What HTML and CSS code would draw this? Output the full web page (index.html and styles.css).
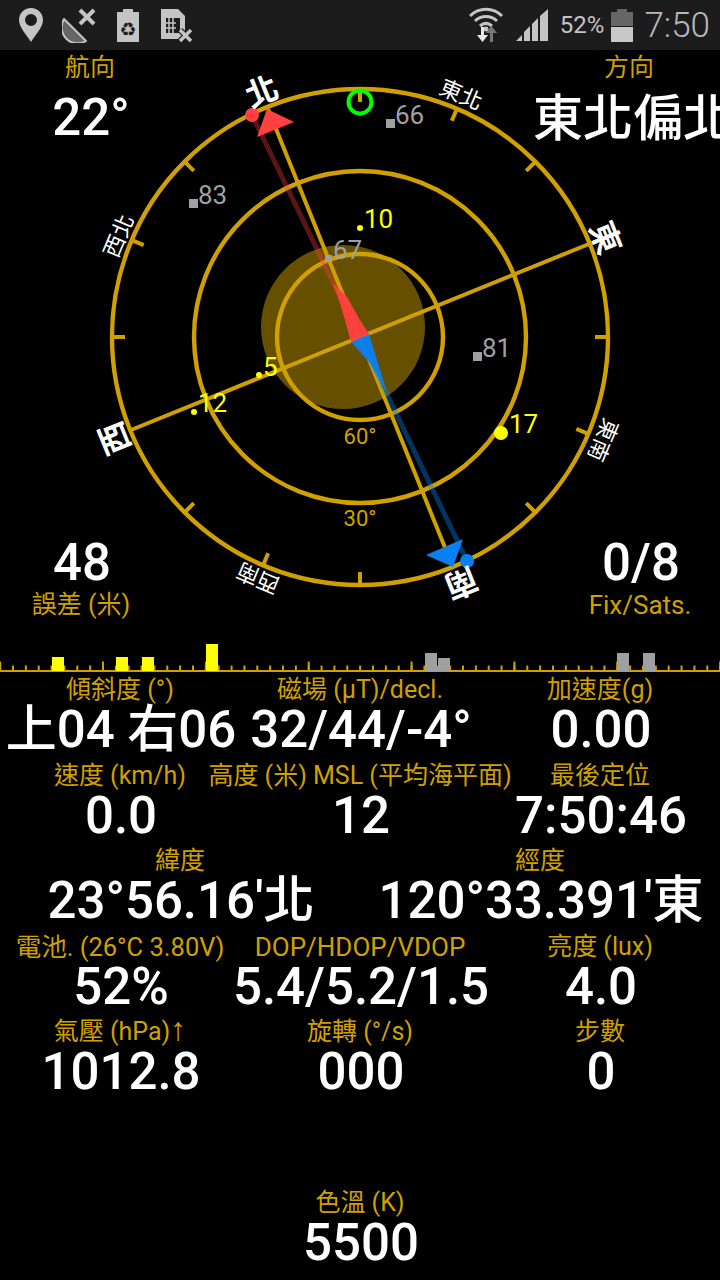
FILE: index.html
```html
<!DOCTYPE html>
<html lang="zh-Hant">
<head>
    <meta charset="UTF-8">
    <meta name="viewport" content="width=device-width, initial-scale=1.0">
    <title>GPS Status</title>
    <link rel="stylesheet" href="styles.css">
</head>
<body>
    <div class="statusbar">
        <div class="status-left">
            <svg class="ic-pin" width="24" height="34" viewBox="0 0 24 34"><path fill-rule="evenodd" fill="#c4c4c4" d="M12 0C5.2 0 0 5.3 0 12c0 7.5 7.5 14.5 12 22 4.5-7.500 12-14.500 12-22C24 5.300 18.800 0 12 0zm0 6a6 6 0 1 1 0 12 6 6 0 0 1 0-12z"/></svg>
            <svg class="ic-dish" width="36" height="36" viewBox="0 0 36 36"><path d="M2 12A16 16 0 0 0 24 34z" fill="#666" stroke="#c4c4c4" stroke-width="2" stroke-linejoin="round"/><path d="M18 3l14 14M32 3L18 17" stroke="#c4c4c4" stroke-width="4"/></svg>
            <svg class="ic-recycle" width="22" height="33" viewBox="0 0 22 33"><path fill="#c4c4c4" d="M6 0h10v3h6v30H0V3h6z"/><text class="recycle-glyph" x="11" y="27" text-anchor="middle">♻</text></svg>
            <svg class="ic-sim" width="32" height="34" viewBox="0 0 32 34"><path fill="#c4c4c4" d="M0 0h17l7 7v23H0z"/><path fill="#1c1c1c" d="M5 9h14v15H5zM16 19v5"/><path d="M8 9v15M12 9v15M5 14h10M5 19h10" stroke="#c4c4c4" stroke-width="1.500"/><path d="M19 21l11 11M30 21L19 32" stroke="#1c1c1c" stroke-width="6"/><path d="M19 21l11 11M30 21L19 32" stroke="#c4c4c4" stroke-width="3.500"/></svg>
        </div>
        <div class="status-right">
            <svg class="ic-wifi" width="34" height="36" viewBox="0 0 34 36"><g fill="none" stroke="#c4c4c4" stroke-width="3"><path d="M1 9C10 0 24 0 33 9"/><path d="M6 14c6-6 16-6 22 0"/><path d="M11 19c4-3.500 8-3.500 12 0"/></g><circle cx="17" cy="22" r="2.500" fill="#c4c4c4"/><path d="M12 20h3v8h4l-5.500 7L8 28h4z" fill="#e8e8e8"/><path d="M21 35v-9h-4l5.500-7 5.500 7h-4v9z" fill="#777"/></svg>
            <svg class="ic-signal" width="32" height="32" viewBox="0 0 32 32"><path fill="#c4c4c4" d="M0 32l6-6v6zM8 32V23l6-6v15zM16 32V15l6-6v23zM24 32V7l8-7v32z"/></svg>
            <span class="batt-text">52%</span>
            <svg class="ic-batt" width="22" height="33" viewBox="0 0 22 33"><path fill="#666" d="M6 0h10v3h6v14H0V3h6z"/><rect y="18" width="22" height="15" fill="#c8c8c8"/></svg>
            <span class="clock">7:50</span>
        </div>
    </div>

    <div class="compass">
        <svg class="dial" width="720" height="580" viewBox="0 50 720 580">
            <circle cx="343" cy="327" r="82" fill="#665000"/>

            <g fill="none" stroke="#d0a000" stroke-width="4.400">
                <circle cx="360" cy="337" r="248"/>
                <circle cx="360" cy="337" r="166"/>
                <circle cx="360" cy="337" r="83"/>
            </g>
            <g stroke="#d0a000" stroke-width="4">
                <line x1="268" y1="109" x2="452" y2="565"/>
                <line x1="131" y1="430" x2="589" y2="244"/>
            </g>

            <g stroke="#d0a000" stroke-width="4">
                <line x1="360" y1="89" x2="360" y2="102" transform="rotate(0 360 337)"/>
                <line x1="360" y1="89" x2="360" y2="102" transform="rotate(23 360 337)"/>
                <line x1="360" y1="89" x2="360" y2="102" transform="rotate(45 360 337)"/>
                <line x1="360" y1="89" x2="360" y2="102" transform="rotate(90 360 337)"/>
                <line x1="360" y1="89" x2="360" y2="102" transform="rotate(113 360 337)"/>
                <line x1="360" y1="89" x2="360" y2="102" transform="rotate(135 360 337)"/>
                <line x1="360" y1="89" x2="360" y2="102" transform="rotate(180 360 337)"/>
                <line x1="360" y1="89" x2="360" y2="102" transform="rotate(203 360 337)"/>
                <line x1="360" y1="89" x2="360" y2="102" transform="rotate(225 360 337)"/>
                <line x1="360" y1="89" x2="360" y2="102" transform="rotate(270 360 337)"/>
                <line x1="360" y1="89" x2="360" y2="102" transform="rotate(293 360 337)"/>
                <line x1="360" y1="89" x2="360" y2="102" transform="rotate(315 360 337)"/>
            </g>

            <circle cx="360" cy="102" r="11.500" fill="none" stroke="#00ff00" stroke-width="4"/>

            <line x1="252" y1="115" x2="360" y2="338" stroke="#ff4040" stroke-opacity="0.35" stroke-width="5"/>
            <line x1="467" y1="561" x2="360" y2="338" stroke="#0a80f0" stroke-opacity="0.4" stroke-width="5"/>
            <polygon points="351,342 345,320 338,297 333,283 347,297 360,320 369,334" fill="#ff4040" fill-opacity="0.95"/>
            <polygon points="351,342 370,363 387,393 378,363 369,334" fill="#0a80f0" fill-opacity="0.95"/>

            <polygon points="267,109 294,122 257,137" fill="#ff4040"/>
            <circle cx="252" cy="115" r="7" fill="#ff4040"/>
            <polygon points="426,555 463,539 453,567" fill="#0a80f0"/>
            <circle cx="467" cy="561" r="7" fill="#0a80f0"/>

            <text class="dir-main" transform="translate(262 92) rotate(-22)">北</text>
            <text class="dir-main" transform="translate(605 238) rotate(68)">東</text>
            <text class="dir-main" transform="translate(461 583) rotate(158)">南</text>
            <text class="dir-main" transform="translate(115 438) rotate(248)">西</text>
            <text class="dir-sub" transform="translate(461 95) rotate(23)">東北</text>
            <text class="dir-sub" transform="translate(603 440) rotate(113)">東南</text>
            <text class="dir-sub" transform="translate(258 578) rotate(203)">西南</text>
            <text class="dir-sub" transform="translate(119 236) rotate(293)">西北</text>

            <text class="elev" x="360" y="444">60°</text>
            <text class="elev" x="360" y="526">30°</text>

            <rect x="386" y="119" width="9" height="9" fill="#a0a0a0"/>
            <text class="sat sat-off" x="395" y="124">66</text>
            <rect x="189" y="199" width="9" height="9" fill="#a0a0a0"/>
            <text class="sat sat-off" x="198" y="204">83</text>
            <rect x="325" y="255" width="7" height="7" fill="#a0a0a0"/>
            <text class="sat sat-off" x="333" y="259">67</text>
            <rect x="473" y="352" width="9" height="9" fill="#a0a0a0"/>
            <text class="sat sat-off" x="482" y="357">81</text>

            <circle cx="360" cy="228" r="3" fill="#ffff00"/>
            <text class="sat sat-on" x="364" y="228">10</text>
            <circle cx="259" cy="375" r="3" fill="#ffff00"/>
            <text class="sat sat-on" x="263" y="376">5</text>
            <circle cx="194" cy="412" r="3" fill="#ffff00"/>
            <text class="sat sat-on" x="198" y="412">12</text>
            <circle cx="501" cy="433" r="7" fill="#ffff00"/>
            <text class="sat sat-on" x="509" y="433">17</text>
        </svg>

        <div class="corner corner-tl"><span class="label">航向</span><span class="value value-top">22°</span></div>
        <div class="corner corner-tr"><span class="label">方向</span><span class="value value-top value-dir">東北偏北</span></div>
        <div class="corner corner-bl"><span class="value">48</span><span class="label label-low">誤差 (米)</span></div>
        <div class="corner corner-br"><span class="value">0/8</span><span class="label label-low label-wide">Fix/Sats.</span></div>
    </div>

    <svg class="graph" width="720" height="43" viewBox="0 630 720 43">
        <line x1="0" y1="668" x2="720" y2="668" stroke="#d0a000" stroke-width="5" stroke-dasharray="2 10.857" stroke-dashoffset="-12"/>
        <line x1="0" y1="666" x2="720" y2="666" stroke="#d0a000" stroke-width="9" stroke-dasharray="2 100.857" stroke-dashoffset="-102"/>
        <rect y="670" width="720" height="2" fill="#d0a000"/>
        <rect x="52" y="657" width="12" height="14" fill="#ffff00"/>
        <rect x="116" y="657" width="12" height="14" fill="#ffff00"/>
        <rect x="142" y="657" width="12" height="14" fill="#ffff00"/>
        <rect x="206" y="644" width="12" height="27" fill="#ffff00"/>
        <rect x="425" y="653" width="12" height="18" fill="#a0a0a0"/>
        <rect x="438" y="658" width="12" height="13" fill="#a0a0a0"/>
        <rect x="617" y="653" width="12" height="18" fill="#a0a0a0"/>
        <rect x="643" y="653" width="12" height="18" fill="#a0a0a0"/>
    </svg>

    <div class="readings">
        <div class="row">
            <div class="cell"><span class="label">傾斜度 (°)</span><span class="value">上04 右06</span></div>
            <div class="cell"><span class="label">磁場 (µT)/decl.</span><span class="value">32/44/-4°</span></div>
            <div class="cell"><span class="label">加速度(g)</span><span class="value">0.00</span></div>
        </div>
        <div class="row">
            <div class="cell"><span class="label">速度 (km/h)</span><span class="value">0.0</span></div>
            <div class="cell"><span class="label">高度 (米) MSL (平均海平面)</span><span class="value">12</span></div>
            <div class="cell"><span class="label">最後定位</span><span class="value">7:50:46</span></div>
        </div>
        <div class="row row-two">
            <div class="cell"><span class="label">緯度</span><span class="value">23°56.16'北</span></div>
            <div class="cell"><span class="label">經度</span><span class="value">120°33.391'東</span></div>
        </div>
        <div class="row">
            <div class="cell"><span class="label label-mid">電池. (26°C 3.80V)</span><span class="value">52%</span></div>
            <div class="cell"><span class="label label-wide">DOP/HDOP/VDOP</span><span class="value">5.4/5.2/1.5</span></div>
            <div class="cell"><span class="label">亮度 (lux)</span><span class="value">4.0</span></div>
        </div>
        <div class="row">
            <div class="cell"><span class="label">氣壓 (hPa)<span class="arrow">↑</span></span><span class="value">1012.8</span></div>
            <div class="cell"><span class="label">旋轉 (°/s)</span><span class="value">000</span></div>
            <div class="cell"><span class="label">步數</span><span class="value">0</span></div>
        </div>
        <div class="row row-one row-last">
            <div class="cell"><span class="label">色溫 (K)</span><span class="value">5500</span></div>
        </div>
    </div>
</body>
</html>
```

FILE: styles.css
```css
html, body {
    margin: 0;
    padding: 0;
    background-color: #000;
}
body {
    width: 720px;
    height: 1280px;
    overflow: hidden;
    font-family: Roboto, "Noto Sans CJK TC", sans-serif;
}
svg {
    display: block;
}

/* status bar */
.statusbar {
    height: 50px;
    background-color: #1c1c1c;
    display: flex;
    justify-content: space-between;
    align-items: center;
    color: #c4c4c4;
}
.status-left, .status-right {
    display: flex;
    align-items: center;
}
.ic-pin { margin-left: 19px; margin-top: 0; }
.ic-dish { margin-left: 19px; }
.ic-recycle { margin-left: 19px; }
.ic-sim { margin-left: 22px; margin-top: 1px; }
.recycle-glyph {
    font-family: "DejaVu Sans", sans-serif;
    font-size: 19px;
    fill: #1c1c1c;
}
.ic-wifi { margin-right: 13px; }
.ic-signal { margin-right: 12px; }
.batt-text {
    font-size: 24px;
    margin-right: 7px;
}
.ic-batt { margin-right: 11px; }
.clock {
    font-size: 35px;
    font-weight: 300;
    margin-right: 10px;
    color: #b8b8b8;
}

/* compass */
.compass {
    position: relative;
    height: 580px;
}
.dial text {
    font-family: Roboto, "Noto Sans CJK TC", sans-serif;
}
.dir-main {
    font-size: 32px;
    font-weight: 700;
    fill: #fff;
    text-anchor: middle;
    dominant-baseline: central;
}
.dir-sub {
    font-size: 22px;
    fill: #fff;
    text-anchor: middle;
    dominant-baseline: central;
}
.elev {
    font-size: 22px;
    fill: #d0a000;
    text-anchor: middle;
}
.sat {
    font-size: 26px;
}
.sat-off { fill: #a0a0a0; }
.sat-on { fill: #ffff00; }

.corner {
    position: absolute;
    display: flex;
    flex-direction: column;
    align-items: center;
    width: 0;
}
.corner-tl { left: 90px; top: 1px; }
.corner-tr { left: 629px; top: 1px; }
.corner-bl { left: 81px; top: 490px; }
.corner-br { left: 640px; top: 490px; }
.value-top { margin-top: 10px; }
.label-low { margin-top: 2px; }

/* shared label + value */
.label {
    font-size: 25px;
    line-height: 34px;
    color: #d0a000;
    white-space: nowrap;
}
.label-mid {
    font-size: 25.500px;
}
.label-wide {
    font-size: 26px;
}
.arrow {
    font-family: "Liberation Sans", sans-serif;
    font-size: 32px;
    line-height: 20px;
}
.value {
    font-size: 51px;
    font-weight: 500;
    line-height: 45.500px;
    padding-left: 2px;
    color: #fff;
    white-space: nowrap;
}
.value-dir {
    margin-top: 12px;
    padding-left: 8px;
    font-size: 50px;
}

/* readings */
.graph {
    height: 43px;
}
.readings {
    display: flex;
    flex-direction: column;
}
.row {
    display: grid;
    grid-template-columns: repeat(3, 1fr);
    height: 85.500px;
}
.row-two {
    grid-template-columns: repeat(2, 1fr);
}
.row-one {
    grid-template-columns: 1fr;
}
.row-last {
    margin-top: 85.500px;
}
.cell {
    display: flex;
    flex-direction: column;
    align-items: center;
    min-width: 0;
}
```
